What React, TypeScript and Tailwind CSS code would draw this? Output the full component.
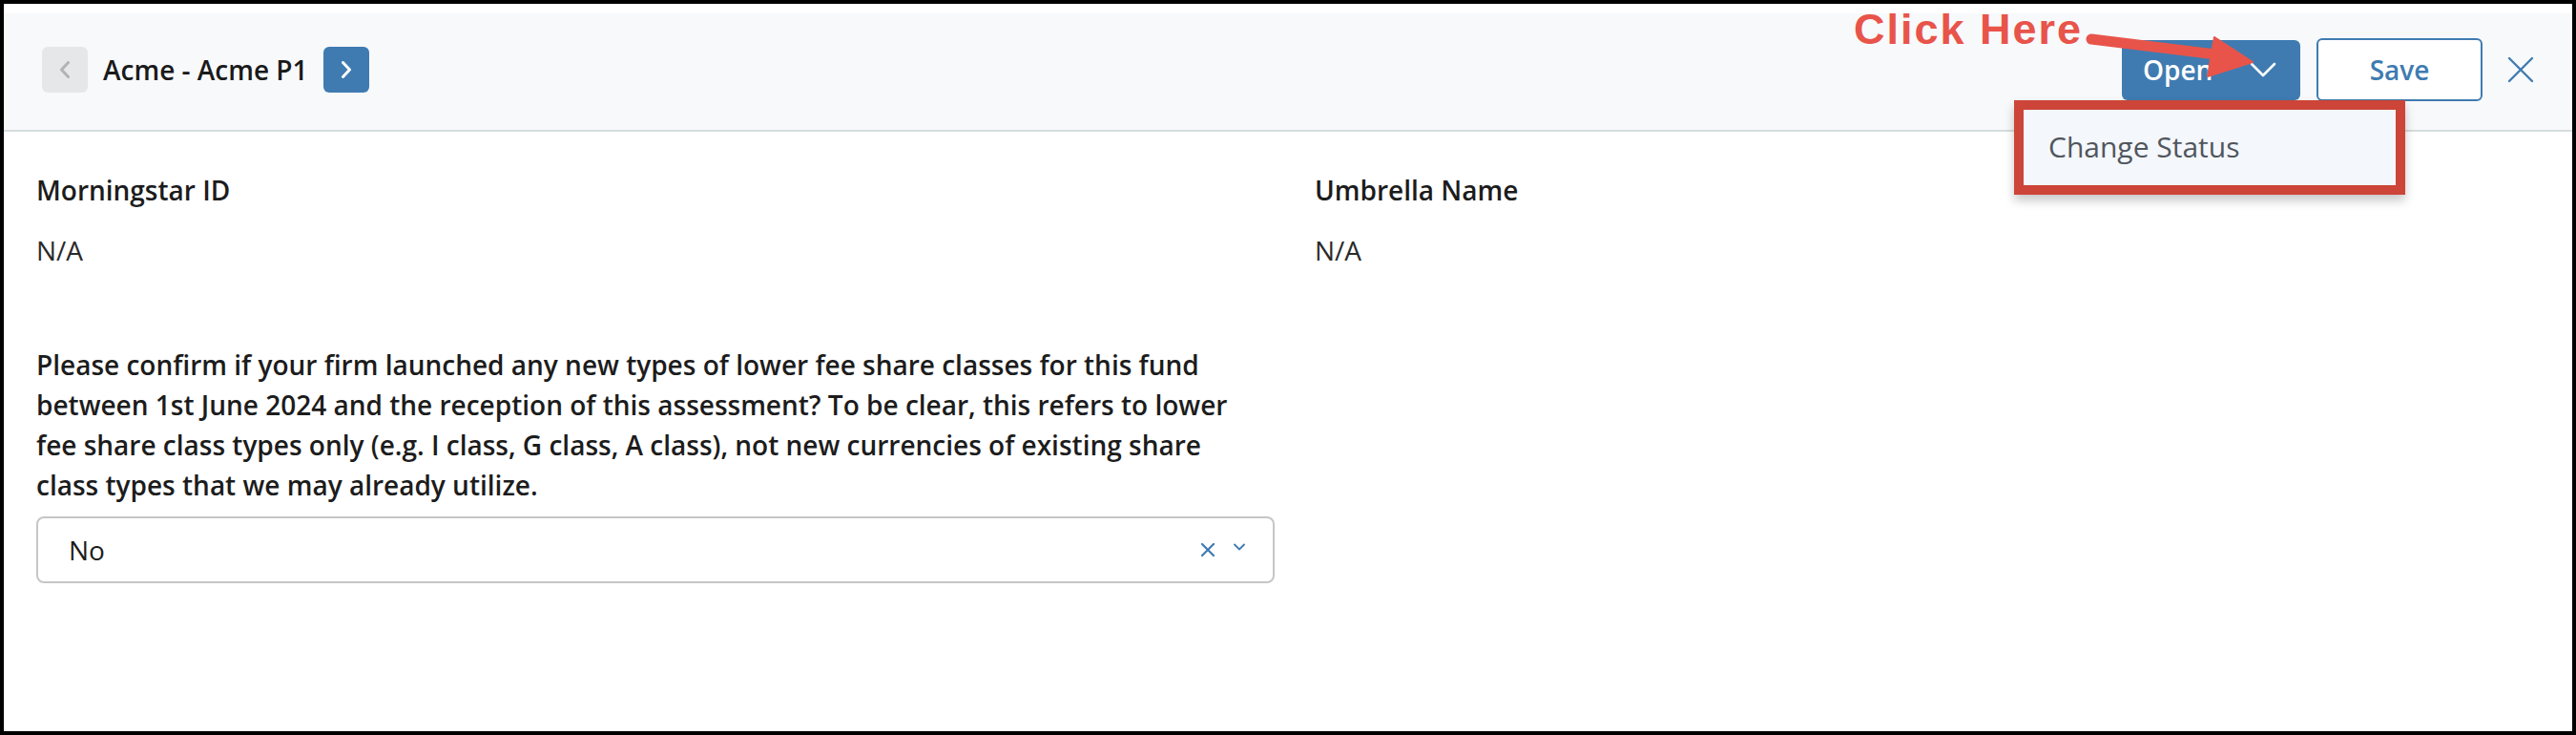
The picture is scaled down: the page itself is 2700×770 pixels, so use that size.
import React from 'react';

const Chevron = ({ dir, className }: { dir: 'left' | 'right'; className: string }) => (
  <svg viewBox="0 0 12 18" className={className} fill="none" stroke="currentColor" strokeWidth={3} strokeLinecap="round" strokeLinejoin="round">
    {dir === 'left' ? <path d="M9.5 1.5 2.5 9l7 7.5" /> : <path d="M2.5 1.5 9.5 9l-7 7.5" />}
  </svg>
);

const App = () => {
  return (
    <div className="relative w-[2700px] h-[770px] border-4 border-black bg-white overflow-hidden font-['Open_Sans',sans-serif] text-[#1c1c1c]">
      {/* header */}
      <div className="mt-[10px] h-[124px] bg-[#f8f9fb] border-b-2 border-[#d6dddd] flex items-center px-10 pb-[4px]">
        <button className="w-12 h-12 rounded-md bg-[#e6e7e8] flex items-center justify-center text-[#b3b3b3]">
          <Chevron dir="left" className="w-[12px] h-[18px]" />
        </button>
        <span className="ml-4 text-[28px] font-semibold leading-[42px] text-[#1a1a1a]">Acme - Acme P1</span>
        <button className="ml-4 w-12 h-12 rounded-md bg-[#3f7bb1] flex items-center justify-center text-white">
          <Chevron dir="right" className="w-[12px] h-[18px]" />
        </button>

        <div className="ml-auto flex items-center">
          <div className="relative">
            <button className="w-[187px] h-[63px] rounded-md bg-[#3f7bb1] text-white flex items-center justify-between pl-[22px] pr-[25px] text-[28px] font-semibold">
              <span>Open</span>
              <svg viewBox="0 0 28 16" className="w-[28px] h-[16px]" fill="none" stroke="currentColor" strokeWidth={2.6} strokeLinecap="round" strokeLinejoin="round">
                <path d="M2 2l12 12L26 2" />
              </svg>
            </button>
            {/* dropdown menu, annotated */}
            <div className="absolute left-[-113px] top-[63px] w-[410px] h-[99px] border-[10px] border-[#cc4538] bg-[#f4f7fb] shadow-[0_6px_10px_rgba(0,0,0,0.22)] flex items-center pl-[26px]">
              <span className="text-[30px] text-[#50565e] leading-none">Change Status</span>
            </div>
          </div>
          <button className="ml-[17px] w-[174px] h-[66px] rounded-md border-2 border-[#3f7bb1] text-[#3f7bb1] text-[28px] font-semibold bg-white">
            Save
          </button>
          <button className="ml-[26px] text-[#3f7bb1]">
            <svg viewBox="0 0 28 28" className="w-[28px] h-[28px]" fill="none" stroke="currentColor" strokeWidth={2.4} strokeLinecap="round">
              <path d="M2 2l24 24M26 2 2 26" />
            </svg>
          </button>
        </div>
      </div>

      {/* body */}
      <div className="px-[34px] pt-10">
        <div className="flex">
          <div className="w-[1340px]">
            <div className="text-[28px] font-semibold leading-[42px]">Morningstar ID</div>
            <div className="mt-[21px] text-[28px] leading-[42px] text-[#2a2a2a]">N/A</div>
          </div>
          <div>
            <div className="text-[28px] font-semibold leading-[42px]">Umbrella Name</div>
            <div className="mt-[21px] text-[28px] leading-[42px] text-[#2a2a2a]">N/A</div>
          </div>
        </div>

        <p className="mt-[78px] w-[1285px] text-[28px] font-semibold leading-[42px]">
          Please confirm if your firm launched any new types of lower fee share classes for this fund between 1st June 2024 and the reception of this assessment? To be clear, this refers to lower fee share class types only (e.g. I class, G class, A class), not new currencies of existing share class types that we may already utilize.
        </p>

        <div className="mt-[12px] w-[1298px] h-[70px] border-2 border-[#c6c6c6] rounded-lg flex items-center pl-[32px] pr-[29px]">
          <span className="text-[28px] text-[#1c1c1c]">No</span>
          <div className="ml-auto flex items-center gap-[19px] text-[#3f7bb1]">
            <svg viewBox="0 0 16 16" className="w-[16px] h-[16px]" fill="none" stroke="currentColor" strokeWidth={2.2} strokeLinecap="round">
              <path d="M2 2l12 12M14 2 2 14" />
            </svg>
            <svg viewBox="0 0 12 8" className="w-[12px] h-[8px] -mt-[6px]" fill="none" stroke="currentColor" strokeWidth={1.8} strokeLinecap="round" strokeLinejoin="round">
              <path d="M1 1.5l5 5 5-5" />
            </svg>
          </div>
        </div>
      </div>

      {/* "Click Here" annotation */}
      <div className="absolute left-[1939px] top-[4px] font-['Liberation_Sans',Arial,sans-serif] font-bold text-[45px] leading-none tracking-[2px] text-[#e8544a]">
        Click Here
      </div>
      <svg className="absolute left-[-4px] top-[-4px] w-[2700px] h-[770px] pointer-events-none" viewBox="0 0 2700 770">
        <path d="M2192 41 L2330 58" stroke="#e8544a" strokeWidth={11} strokeLinecap="round" />
        <path d="M2321 39 L2361 65 L2314 80 Z" fill="#e8544a" stroke="#e8544a" strokeWidth={2} strokeLinejoin="round" />
      </svg>
    </div>
  );
};

export default App;
